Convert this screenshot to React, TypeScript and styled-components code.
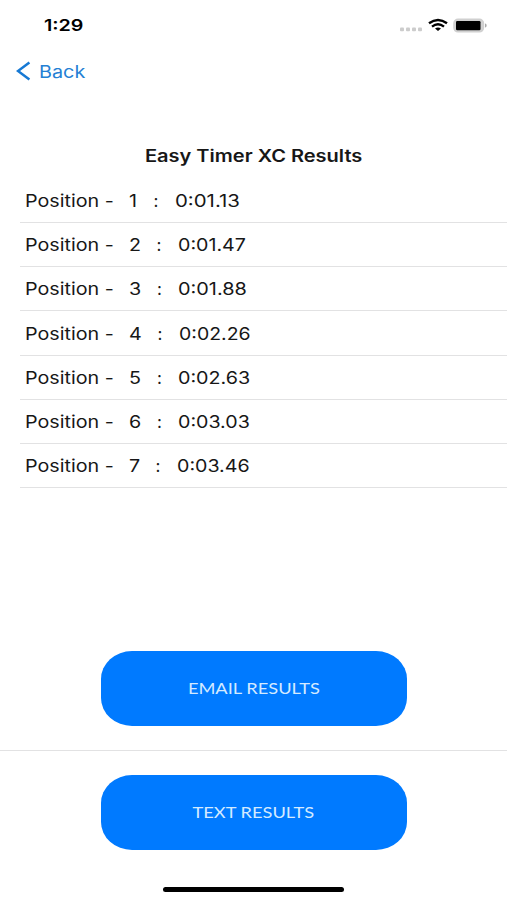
import React from "react";
import styled, { createGlobalStyle } from "styled-components";

const rows = [
  { position: 1, time: "0:01.13", gap: 24, stretch: 1.2 },
  { position: 2, time: "0:01.47", gap: 27, stretch: 1.155 },
  { position: 3, time: "0:01.88", gap: 27.5, stretch: 1.17 },
  { position: 4, time: "0:02.26", gap: 28, stretch: 1.145 },
  { position: 5, time: "0:02.63", gap: 27.5, stretch: 1.16 },
  { position: 6, time: "0:03.03", gap: 27.5, stretch: 1.155 },
  { position: 7, time: "0:03.46", gap: 26, stretch: 1.155 },
];

const GlobalStyle = createGlobalStyle`
  * { box-sizing: border-box; }
  body { margin: 0; background: #fff; }
`;
const Screen = styled.main`
  width: 507px; height: 900px; display: flex; flex-direction: column;
  overflow: hidden; color: #171717; background: #fff; font-family: Inter, sans-serif;
`;
const WideText = styled.span<{ $scale: number; $center?: boolean }>`
  display: inline-block;
  white-space: pre;
  transform: scaleX(${p => p.$scale});
  transform-origin: ${p => p.$center ? "center" : "left"};
`;
const StatusBar = styled.header`
  height: 51px; flex: none; display: flex; justify-content: space-between;
  padding: 15px 19px 0 43.5px;
`;
const Clock = styled.time`
  font-size: 16px; line-height: 21px; font-weight: 600; color: #000;
`;
const StatusIcons = styled.svg`
  width: 89px; height: 22px; display: block;
`;
const Back = styled.button`
  height: 40px; width: 100px; flex: none; display: flex; align-items: center;
  padding: 1px 0 0 16px; border: 0; background: transparent; color: #2480d4;
  font: 17px/24px Inter, sans-serif;
`;
const BackIcon = styled.svg`
  width: 15px; height: 21px; flex: none; margin-right: 8px;
`;
const Title = styled.h1`
  margin: 54px 0 0; padding-top: 1px; height: 34px; flex: none; text-align: center;
  font-size: 16.7px; line-height: 21px; font-weight: 600;
`;
const Results = styled.ol`
  margin: 0 0 0 20px; padding: 0; list-style: none; height: 309px; flex: none;
`;
const Row = styled.li`
  height: 44.15px; padding: 11.2px 0 0 5.4px; display: flex; border-bottom: 1px solid #e2e2e3;
  font-size: 17px; line-height: 22px;
`;
const Label = styled.span`
  width: 104px; flex: none;
`;
const Position = styled.span<{ $width: number }>`
  width: ${p => p.$width}px; flex: none;
`;
const Colon = styled.span`
  width: 21.5px; flex: none;
`;
const Actions = styled.footer`
  margin-top: 163px; flex: none; display: flex; flex-direction: column;
`;
const Action = styled.section<{ $divided?: boolean }>`
  height: ${p => p.$divided ? 100 : 136}px; padding-top: ${p => p.$divided ? 0 : 24}px;
  flex: none; display: flex; justify-content: center; align-items: flex-start;
  border-bottom: ${p => p.$divided ? "1px solid #e2e2e3" : "0"};
`;
const Button = styled.button`
  width: 306px; height: 75px; padding: 0 0 2px; border: 0; border-radius: 31px / 28px;
  background: #007aff; color: #d4eaff; font: 16px/22px Lato, sans-serif;
`;
const HomeIndicator = styled.div`
  width: 181px; height: 5px; flex: none; align-self: center; border-radius: 3px; background: #000;
`;

export default function App() {
  return <>
    <GlobalStyle />
    <Screen>
      <StatusBar>
        <Clock><WideText $scale={1.23}>1:29</WideText></Clock>
        <StatusIcons viewBox="0 0 89 22">
          <g fill="#cccccc">
            <rect x="1" y="12.5" width="4" height="3.8" rx="1" />
            <rect x="7" y="12.5" width="4" height="3.8" rx="1" />
            <rect x="13" y="12.5" width="4" height="3.8" rx="1" />
            <rect x="19" y="12.5" width="4" height="3.8" rx="1" />
          </g>
          <g fill="none" stroke="#000" strokeWidth="2.4">
            <path d="M30 8.3Q39 1.8 48 8.3M33 11.6Q39 7 45 11.6" />
          </g>
          <path d="M36 13.6Q39 11.6 42 13.6L39 16Z" />
          <rect x="55" y="4.4" width="29.4" height="12.4" rx="4" fill="#d2d2d2" stroke="#d0d0d0" strokeWidth="1.6" />
          <rect x="57" y="6" width="24.5" height="9.2" rx="1.2" />
          <path d="M86 8.6v4c2.2-.6 2.2-3.4 0-4" fill="#aaa" />
        </StatusIcons>
      </StatusBar>
      <Back>
        <BackIcon viewBox="0 0 15 21"><path d="M13.4 1.4 2 10 13.4 18.6" fill="none" stroke="#1679d4" strokeWidth="2.5" /></BackIcon>
        <WideText $scale={1.165}>Back</WideText>
      </Back>
      <Title><WideText $scale={1.2} $center>Easy Timer XC Results</WideText></Title>
      <Results>
        {rows.map(row => (
          <Row key={row.position}>
            <Label><WideText $scale={1.16}>Position -</WideText></Label>
            <Position $width={row.gap}><WideText $scale={1.16}>{row.position}</WideText></Position>
            <Colon>:</Colon>
            <WideText $scale={row.stretch}>{row.time}</WideText>
          </Row>
        ))}
      </Results>
      <Actions>
        <Action $divided><Button><WideText $scale={1.14} $center>EMAIL RESULTS</WideText></Button></Action>
        <Action><Button><WideText $scale={1.14} $center>TEXT RESULTS</WideText></Button></Action>
      </Actions>
      <HomeIndicator />
    </Screen>
  </>;
}
